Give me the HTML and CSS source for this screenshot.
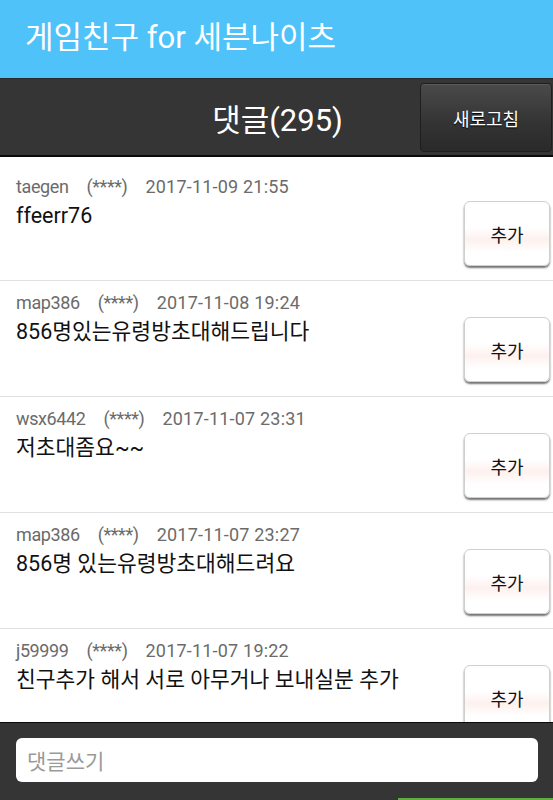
FILE: index.html
```html
<!DOCTYPE html>
<html lang="ko">
<head>
    <meta charset="UTF-8">
    <meta name="viewport" content="width=device-width, initial-scale=1.0">
    <title>게임친구 for 세븐나이츠</title>
    <link rel="stylesheet" href="styles.css">
</head>
<body>
<div class="app">
    <div class="appbar">게임친구 for 세븐나이츠</div>
    <div class="toolbar">
        <div class="toolbar-title">댓글(295)</div>
        <button class="refresh">새로고침</button>
    </div>
    <ul class="comments">
        <li class="comment">
            <div class="comment-body">
                <div class="meta"><span>taegen</span><span>(****)</span><span class="date">2017-11-09 21:55</span></div>
                <div class="text">ffeerr76</div>
            </div>
            <button class="add">추가</button>
        </li>
        <li class="comment">
            <div class="comment-body">
                <div class="meta"><span>map386</span><span>(****)</span><span class="date">2017-11-08 19:24</span></div>
                <div class="text">856명있는유령방초대해드립니다</div>
            </div>
            <button class="add">추가</button>
        </li>
        <li class="comment">
            <div class="comment-body">
                <div class="meta"><span>wsx6442</span><span>(****)</span><span class="date">2017-11-07 23:31</span></div>
                <div class="text">저초대좀요~~</div>
            </div>
            <button class="add">추가</button>
        </li>
        <li class="comment">
            <div class="comment-body">
                <div class="meta"><span>map386</span><span>(****)</span><span class="date">2017-11-07 23:27</span></div>
                <div class="text">856명 있는유령방초대해드려요</div>
            </div>
            <button class="add">추가</button>
        </li>
        <li class="comment">
            <div class="comment-body">
                <div class="meta"><span>j59999</span><span>(****)</span><span class="date">2017-11-07 19:22</span></div>
                <div class="text">친구추가 해서 서로 아무거나 보내실분 추가</div>
            </div>
            <button class="add">추가</button>
        </li>
    </ul>
    <div class="writebar">
        <input type="text" class="write" placeholder="댓글쓰기">
    </div>
    <div class="bottom-line"></div>
</div>
</body>
</html>
```

FILE: styles.css
```css
html, body {
    margin: 0;
    padding: 0;
}
body {
    font-family: Roboto, "Noto Sans CJK KR", sans-serif;
    background: #fff;
}
.app {
    display: flex;
    flex-direction: column;
    height: 800px;
    overflow: hidden;
}
.appbar {
    height: 78px;
    flex: none;
    background: #50c2fa;
    color: #fff;
    font-size: 31px;
    line-height: 76px;
    padding-left: 25px;
}
.toolbar {
    height: 76px;
    flex: none;
    background: #353535;
    border-top: 1px solid #2a2a2a;
    border-bottom: 2px solid #0a0a0a;
    display: flex;
    align-items: center;
    justify-content: center;
    position: relative;
}
.toolbar-title {
    color: #fff;
    font-size: 31px;
    padding-left: 2px;
}
.refresh {
    position: absolute;
    right: 1px;
    top: 4px;
    width: 132px;
    height: 69px;
    background: linear-gradient(#4a4a4a, #333 60%, #2a2a2a);
    border: 1px solid #1e1e1e;
    border-radius: 4px;
    color: #fff;
    font-family: "Noto Sans CJK KR", sans-serif;
    font-size: 18px;
    text-shadow: 0 1px 1px #000;
    box-shadow: inset 0 1px 0 #5a5a5a;
}
.comments {
    list-style: none;
    margin: 0;
    padding: 8px 0 0;
    flex: 1;
    overflow: hidden;
}
.comment {
    height: 115px;
    border-bottom: 1px solid #e0e0e0;
    display: flex;
    padding: 0 3px 0 16px;
}
.comment-body {
    flex: 1;
    padding-top: 11px;
}
.meta {
    color: #6b6b6b;
    font-size: 18px;
    line-height: 22px;
    letter-spacing: -0.4px;
}
.meta span {
    margin-right: 18px;
}
.meta .date {
    letter-spacing: 0.2px;
}
.text {
    color: #111;
    font-size: 21.5px;
    line-height: 28px;
    margin-top: 4px;
}
.add {
    flex: none;
    align-self: flex-start;
    margin-top: 36px;
    width: 86px;
    height: 65px;
    background: linear-gradient(#fff 40%, #fdf1ef 60%, #fff 80%);
    border: 1px solid #cfcfcf;
    border-radius: 6px;
    box-shadow: 0 2px 2px rgba(0, 0, 0, 0.55);
    font-family: "Noto Sans CJK KR", sans-serif;
    font-size: 18px;
    color: #111;
}
.writebar {
    height: 76px;
    flex: none;
    background: #353535;
    border-top: 1px solid #0a0a0a;
    padding: 15px 15px 0 16px;
    box-sizing: border-box;
}
.write {
    width: 100%;
    height: 44px;
    box-sizing: border-box;
    border: none;
    border-radius: 6px;
    padding: 0 11px;
    font-family: "Noto Sans CJK KR", sans-serif;
    font-size: 21px;
    background: #fff;
}
.write::placeholder {
    color: #9a9a9a;
}
.bottom-line {
    height: 2px;
    flex: none;
    background: linear-gradient(90deg, #353535 72%, #5fae3b 72%);
}
```
